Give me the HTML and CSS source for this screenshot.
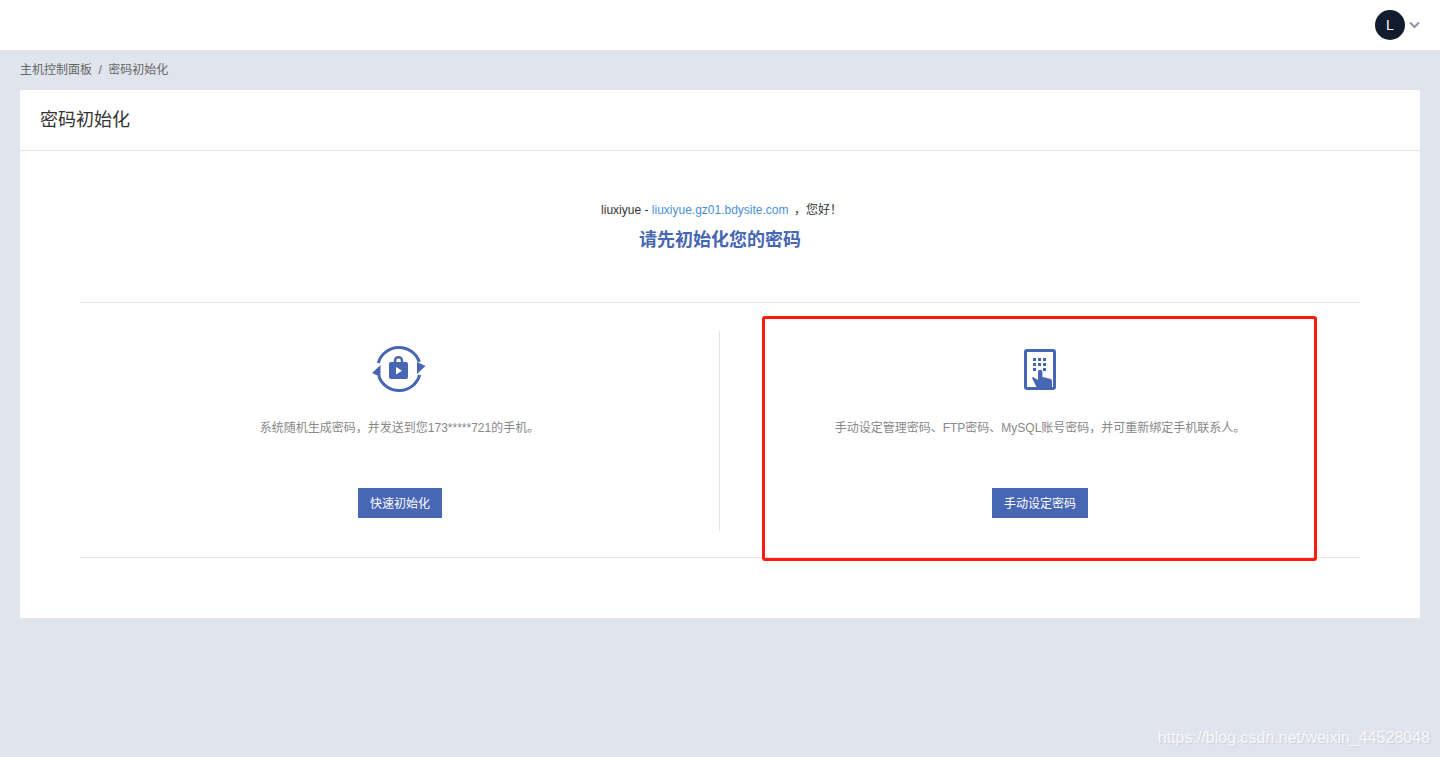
FILE: index.html
```html
<!DOCTYPE html>
<html lang="zh-CN">
<head>
  <meta charset="UTF-8">
  <title>密码初始化</title>
  <link rel="stylesheet" href="styles.css">
</head>
<body>

<div class="topbar">
  <div class="avatar">L</div>
  <svg class="caret" width="11" height="8" viewBox="0 0 11 8"><path d="M1 1.500 5.500 6 10 1.500" fill="none" stroke="#8a94a6" stroke-width="2"/></svg>
</div>

<div class="crumbs">
  <a>主机控制面板</a><span class="sep">/</span><a>密码初始化</a>
</div>

<div class="card">
  <div class="card-head">密码初始化</div>
  <div class="card-body">
    <div class="hello">
      <p class="greet">liuxiyue - <a class="site">liuxiyue.gz01.bdysite.com</a> <span class="greet-end">，您好！</span></p>
      <h2 class="title">请先初始化您的密码</h2>
    </div>

    <div class="options">
      <div class="option">
        <svg class="icon" width="54" height="48" viewBox="0 0 54 48">
          <path d="M6.300 18A21.500 21.500 0 0 1 47.300 17" fill="none" stroke="#4766b3" stroke-width="3"/>
          <path d="M47.700 30A21.500 21.500 0 0 1 6.700 31" fill="none" stroke="#4766b3" stroke-width="3"/>
          <path d="M0 28 8.500 20v12zM53.500 21 45 17v12z" fill="#4766b3"/>
          <path d="M23 19v-3.300a3.500 3.500 0 0 1 7 0V19" fill="none" stroke="#4766b3" stroke-width="2.500"/>
          <rect x="17" y="17" width="19" height="17" rx="2" fill="#4766b3"/>
          <path d="M24 22v7.500l6-3.750z" fill="#fff"/>
        </svg>
        <p class="desc">系统随机生成密码，并发送到您173*****721的手机。</p>
        <a class="btn">快速初始化</a>
      </div>
      <div class="option">
        <svg class="icon" width="54" height="48" viewBox="0 0 54 48">
          <rect x="12.500" y="5.500" width="29" height="38" rx="1.500" fill="none" stroke="#4766b3" stroke-width="3"/>
          <g fill="#4766b3">
            <rect x="20" y="13" width="3" height="3"/><rect x="25" y="13" width="3" height="3"/><rect x="30" y="13" width="3" height="3"/>
            <rect x="20" y="18" width="3" height="3"/><rect x="25" y="18" width="3" height="3"/><rect x="30" y="18" width="3" height="3"/>
            <rect x="20" y="23" width="3" height="3"/><rect x="30" y="23" width="3" height="3"/>
            <path d="M25 27a2.200 2.200 0 0 1 4.400 0v5l8.600 2 1 2v7H24l-5-10 1-1 5 3z"/>
          </g>
        </svg>
        <p class="desc">手动设定管理密码、FTP密码、MySQL账号密码，并可重新绑定手机联系人。</p>
        <a class="btn">手动设定密码</a>
      </div>
    </div>
  </div>
</div>

<div class="highlight"></div>
<div class="watermark">https://blog.csdn.net/weixin_44528048</div>

</body>
</html>
```

FILE: styles.css
```css
* { box-sizing: border-box; }
html, body { height: 100%; }
body {
  margin: 0;
  background: #e0e4ec;
  font-family: "Liberation Sans", "Noto Sans CJK SC", sans-serif;
  font-size: 12px;
  color: #333;
  overflow: hidden;
  position: relative;
}
.topbar {
  height: 50px;
  background: #fff;
  display: flex;
  justify-content: flex-end;
  align-items: center;
  padding-right: 20px;
}
.avatar {
  width: 30px; height: 30px;
  border-radius: 50%;
  background: #131b2e;
  color: #fff;
  font-size: 14px;
  line-height: 30px;
  text-align: center;
}
.caret { margin-left: 4px; }
.crumbs {
  height: 40px;
  padding-left: 20px;
  line-height: 41px;
  color: #666;
}
.sep { margin: 0 6.500px; }
.card {
  margin: 0 20px;
  height: 528px;
  background: #fff;
}
.card-head {
  height: 61px;
  padding-left: 20px;
  border-bottom: 1px solid #e5e5e5;
  font-size: 18px;
  line-height: 60px;
  color: #333;
}
.card-body { padding: 0 60px; }
.hello {
  height: 152px;
  padding-top: 50px;
  text-align: center;
  border-bottom: 1px solid #e5e5e5;
}
.greet { margin: 0; padding-left: 3px; line-height: 18px; color: #333; }
.greet-end { margin-left: 2px; }
.site { color: #4a8fd8; }
.title {
  margin: 9px 0 0;
  font-size: 18px;
  line-height: 24px;
  color: #4766b3;
}
.options {
  display: flex;
  height: 255px;
  padding: 28px 0 26px;
  border-bottom: 1px solid #e5e5e5;
}
.option {
  flex: 1 1 50%;
  display: flex;
  flex-direction: column;
  align-items: center;
  padding-top: 14px;
}
.option:first-child { border-right: 1px solid #e5e5e5; }
.option:first-child .icon { margin-right: 1px; }
.option:first-child .btn { margin-left: 1px; }
.icon { display: block; }
.desc {
  margin: 25px 0 0;
  line-height: 20px;
  color: #888;
}
.btn {
  margin-top: 50px;
  padding: 0 12px;
  height: 30px;
  line-height: 33px;
  background: #4766b3;
  color: #fff;
}
.highlight {
  position: absolute;
  left: 762px; top: 316px;
  width: 555px; height: 245px;
  border: 3px solid #ff1a0d;
  border-radius: 3px;
}
.watermark {
  position: absolute;
  right: 10px; bottom: 9px;
  font-size: 16px;
  line-height: 20px;
  color: #fff;
  opacity: .75;
  text-shadow: 1px 1px 1px rgba(0,0,0,.12);
}
```
